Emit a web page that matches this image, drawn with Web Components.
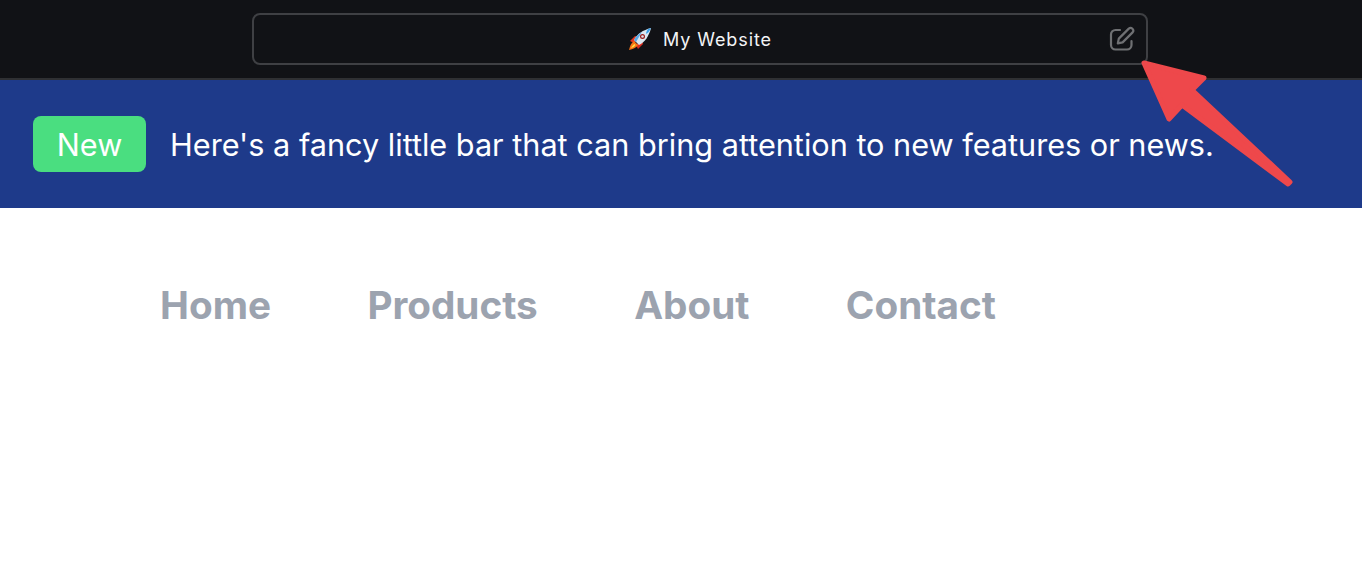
<!DOCTYPE html>
<html>
<head>
<meta charset="utf-8">
<title>My Website</title>
<style>
  html, body { margin: 0; background: #fff; }
  body { font-family: Inter, "Liberation Sans", sans-serif; position: relative; height: 574px; overflow: hidden; }
</style>
</head>
<body>
<browser-bar title-text="My Website"></browser-bar>
<news-bar label="New">Here's a fancy little bar that can bring attention to new features or news.</news-bar>
<site-nav>
  <a href="#">Home</a>
  <a href="#">Products</a>
  <a href="#">About</a>
  <a href="#">Contact</a>
</site-nav>
<callout-arrow></callout-arrow>

<script>
class BrowserBar extends HTMLElement {
  constructor() {
    super();
    this.attachShadow({ mode: 'open' });
  }

  connectedCallback() {
    this.shadowRoot.innerHTML = `
      <style>
        :host {
          display: flex;
          justify-content: center;
          box-sizing: border-box;
          height: 80px;
          padding: 13px 0 0 38px;
          background: #111216;
          border-bottom: 2px solid #2f3033;
        }
        .address {
          box-sizing: border-box;
          width: 896px;
          height: 52px;
          display: flex;
          align-items: center;
          justify-content: center;
          gap: 11px;
          position: relative;
          border: 2px solid #3f4044;
          border-radius: 8px;
          color: #f3f4f6;
          font-size: 18px;
          letter-spacing: 0.9px;
        }
        .rocket { width: 24px; height: 24px; display: block; }
        .edit { position: absolute; right: 11px; top: 11px; width: 26px; height: 26px; display: block; }
      </style>
      <div class="address">
        <svg class="rocket" viewBox="0 0 24 24">
          <path d="M2 14 L7 9 L11 10 L6 16 Z" fill="#e5381f"/>
          <path d="M10 22 L15 17 L14 13 L8 18 Z" fill="#d92d20"/>
          <path d="M1 23 C2 19 3 16 6 14 L10 18 C8 21 5 22 1 23 Z" fill="#f97316"/>
          <path d="M3 21 C4 19 5 18 6.5 17 L7.5 18 C6.5 19.5 5 20.5 3 21 Z" fill="#fde047"/>
          <path d="M6 13 C9 7 15 3 23 1 C21 9 17 15 11 18 Z" fill="#dbe7f0"/>
          <path d="M23 1 C21 5 20 6 18 7 C18 5 19 3 20 2 Z" fill="#3b9fe8"/>
          <path d="M6 13 C8 9 11 7 14 5 L8 15 Z" fill="#5aa9e6"/>
          <circle cx="14.5" cy="9.5" r="2.5" fill="#991b1b"/>
          <circle cx="14.5" cy="9.5" r="1.3" fill="#e2e8f0"/>
        </svg>
        <span>${this.getAttribute('title-text')}</span>
        <svg class="edit" viewBox="0 0 26 26" fill="none" stroke="#6f7073" stroke-width="2.2" stroke-linecap="round" stroke-linejoin="round">
          <path d="M11 4 H6.5 A4.5 4.5 0 0 0 2 8.5 V19 A4.5 4.5 0 0 0 6.5 23.5 H18 A4.5 4.5 0 0 0 22.5 19 V15"/>
          <path d="M19.8 2.6 A2.7 2.7 0 0 1 23.6 6.4 L13.6 16.4 L8.8 17.4 L9.8 12.6 Z"/>
        </svg>
      </div>
    `;
  }
}

class NewsBar extends HTMLElement {
  constructor() {
    super();
    this.attachShadow({ mode: 'open' });
  }

  connectedCallback() {
    this.shadowRoot.innerHTML = `
      <style>
        :host {
          display: flex;
          align-items: center;
          gap: 24px;
          box-sizing: border-box;
          height: 128px;
          padding: 0 33px;
          background: #1e3a8a;
          color: #fff;
          font-size: 30.65px;
        }
        .badge {
          display: flex;
          align-items: center;
          justify-content: center;
          width: 113px;
          height: 56px;
          border-radius: 8px;
          background: #4ade80;
        }
      </style>
      <span class="badge">${this.getAttribute('label')}</span>
      <span><slot></slot></span>
    `;
  }
}

class SiteNav extends HTMLElement {
  constructor() {
    super();
    this.attachShadow({ mode: 'open' });
  }

  connectedCallback() {
    this.shadowRoot.innerHTML = `
      <style>
        :host {
          display: flex;
          gap: 96.4px;
          padding: 75px 160px 0;
          font-size: 38.7px;
          font-weight: 650;
          line-height: 44px;
        }
        ::slotted(a) {
          color: #9ca3af;
          text-decoration: none;
        }
      </style>
      <slot></slot>
    `;
  }
}

class CalloutArrow extends HTMLElement {
  constructor() {
    super();
    this.attachShadow({ mode: 'open' });
  }

  connectedCallback() {
    this.shadowRoot.innerHTML = `
      <style>
        :host { position: absolute; left: 1130px; top: 50px; width: 180px; height: 145px; display: block; }
        svg { display: block; }
      </style>
      <svg width="180" height="145" viewBox="0 0 180 145">
        <path d="M14 13 L74 28 L62 40 L160 132 L158 134 L52 55 L39 69 Z" fill="#ee484b" stroke="#ee484b" stroke-width="5" stroke-linejoin="round"/>
      </svg>
    `;
  }
}

customElements.define('browser-bar', BrowserBar);
customElements.define('news-bar', NewsBar);
customElements.define('site-nav', SiteNav);
customElements.define('callout-arrow', CalloutArrow);
</script>
</body>
</html>
